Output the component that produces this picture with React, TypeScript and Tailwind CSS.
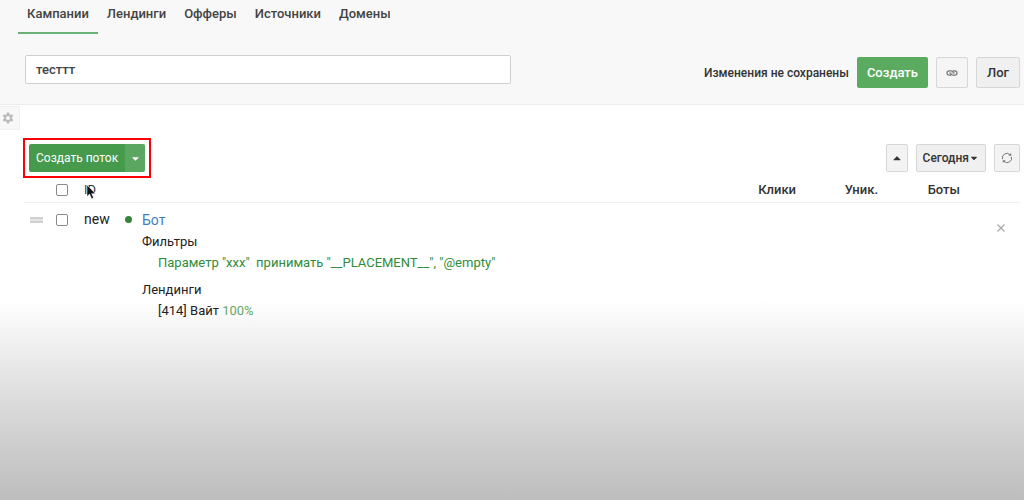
import type { ReactNode } from 'react';
import { FaCaretDown, FaCaretUp } from 'react-icons/fa';

const tabs = ['Кампании', 'Лендинги', 'Офферы', 'Источники', 'Домены'];

function GearIcon() {
  return (
    <svg viewBox="0 0 24 24" className="w-3 h-3" fill="none" stroke="#bbb" aria-hidden="true">
      <circle cx="12" cy="12" r="6" strokeWidth="4" />
      <path
        d="M12 1v5M12 18v5M2.5 6.5l4.3 2.5M17.2 15l4.3 2.5M2.5 17.5L6.8 15M17.2 9l4.3-2.5"
        strokeWidth="5"
      />
    </svg>
  );
}

function LinkIcon() {
  return (
    <svg viewBox="0 0 12 8" className="w-3 h-2" fill="none" stroke="#777" strokeLinecap="round" aria-hidden="true">
      <path d="M4.6 6.2H3.2a2.2 2.2 0 0 1 0-4.4h2c1 0 1.7.6 2 1.4M7.4 1.8h1.4a2.2 2.2 0 0 1 0 4.4h-2c-1 0-1.7-.6-2-1.4" strokeWidth="1.2" />
      <path d="M3.4 4h1.8M6.8 4h1.8" strokeWidth=".9" />
    </svg>
  );
}

function RefreshIcon() {
  return (
    <svg viewBox="0 0 12 12" className="w-3 h-3" fill="none" stroke="#777" aria-hidden="true">
      <path d="M1.6 7.2A4.5 4.5 0 0 1 9 2.6M10.4 4.8A4.5 4.5 0 0 1 3 9.4" />
      <path d="M10.2 1v2.8H7.4zM1.8 11V8.2h2.8z" fill="#777" stroke="none" />
    </svg>
  );
}

function Cursor() {
  return (
    <svg viewBox="0 0 10 16" className="absolute left-[2px] top-[6px] w-[10px] h-4" aria-hidden="true">
      <path d="M1 1v11.4l2.6-2.3 2 4.7 2-.9-2-4.5h3.6z" fill="#111" stroke="#fff" strokeWidth=".5" />
    </svg>
  );
}

function GrayButton({ label, className, children }: { label?: string; className: string; children: ReactNode }) {
  return (
    <button
      aria-label={label}
      className={`flex items-center justify-center border border-[#d6d6d6] text-[#333] font-medium rounded-xs ${className}`}
    >
      {children}
    </button>
  );
}

function Checkbox({ label }: { label: string }) {
  return (
    <input
      type="checkbox"
      aria-label={label}
      className="block appearance-none w-3 h-3 bg-white border border-[#8a8a8a] rounded-xs"
    />
  );
}

export default function App() {
  return (
    <div className="min-h-screen bg-[linear-gradient(to_bottom,#fff_60%,#f1f1f1_68%,#dadada_81%,#bdbdbd_100%)] font-['Roboto','Noto_Sans',sans-serif] text-[13px] text-[#222]">
      <header className="bg-[#f8f8f8] border-b border-[#ececec]">
        <nav className="flex pl-[18px]">
          {tabs.map((tab, i) => (
            <a
              key={tab}
              href="#"
              className={`px-[9px] pt-1 pb-2 leading-5 font-medium text-[#444] border-b-2 ${i === 0 ? 'border-[#6bb077]' : 'border-transparent'}`}
            >
              {tab}
            </a>
          ))}
        </nav>

        <div className="flex items-start justify-between pl-[25px] pr-1 pt-[21px] pb-4">
          <input
            type="text"
            aria-label="Название"
            defaultValue="тесттт"
            className="w-[486px] h-[29px] px-[10px] bg-white border border-[#d0d0d0] rounded-xs text-[#444] font-medium"
          />
          <div className="flex items-center gap-2 pt-[2px]">
            <span className="text-xs font-medium text-[#333]">Изменения не сохранены</span>
            <button className="h-[31px] px-[10px] bg-[#5aab5f] rounded-xs text-white font-medium">Создать</button>
            <GrayButton label="Ссылка" className="w-8 h-[31px] bg-[#f5f5f5]">
              <LinkIcon />
            </GrayButton>
            <GrayButton className="h-[31px] px-[10px] bg-[#f0f0f0]">Лог</GrayButton>
          </div>
        </div>
      </header>

      <main>
        <button aria-label="Настройки" className="flex items-center pl-[2px] w-5 h-6 mt-px bg-[#f8f8f8] border border-l-0 border-[#f0f0f0]">
          <GearIcon />
        </button>

        {/* Toolbar */}
        <div className="flex items-center justify-between mt-2 pl-[23px] pr-1">
          <div className="p-1 border-2 border-[#fb0007]">
            <div className="flex h-7 rounded-xs overflow-hidden text-white text-xs">
              <button className="px-[7px] bg-[#459a4b]">Создать поток</button>
              <button aria-label="Ещё" className="flex items-center justify-center w-5 bg-[#5ba660]">
                <FaCaretDown size={11} />
              </button>
            </div>
          </div>
          <div className="flex gap-2 text-xs">
            <GrayButton label="Свернуть" className="w-[22px] h-7 bg-[#f3f3f3]">
              <FaCaretUp size={12} />
            </GrayButton>
            <GrayButton className="h-7 px-[6px] bg-[#f0f0f0]">
              Сегодня <FaCaretDown size={10} />
            </GrayButton>
            <GrayButton label="Обновить" className="w-[26px] h-7 bg-[#f3f3f3]">
              <RefreshIcon />
            </GrayButton>
          </div>
        </div>

        {/* Flows */}
        <div className="pl-6 pr-1">
          <table className="w-full table-fixed">
            <thead>
              <tr className="h-6 border-b border-[#f1f1f1] text-[#333] leading-5">
                <th className="w-8"></th>
                <th className="w-7"><Checkbox label="Выбрать все" /></th>
                <th className="relative w-[41px] text-left font-normal">
                  ID
                  <Cursor />
                </th>
                <th></th>
                <th className="w-[82px] text-right font-medium">Клики</th>
                <th className="w-[82px] text-right font-medium">Уник.</th>
                <th className="w-[82px] text-right font-medium">Боты</th>
                <th className="w-[60px]"></th>
              </tr>
            </thead>
            <tbody>
              <tr className="align-top leading-[21px]">
                <td className="pt-[14px] pl-[6px]">
                  <div className="w-[13px] h-[6px] border-y-2 border-[#d0d0d0] bg-[#e6e6e6]"></div>
                </td>
                <td className="pt-[11px]"><Checkbox label="Выбрать поток new" /></td>
                <td className="pt-[6px] text-sm leading-[21px]">new</td>
                <td className="pt-[7px]">
                  <div className="flex gap-[10px]">
                    <span className="w-[7px] h-[7px] mt-[6px] rounded-full bg-[#35843a]"></span>
                    <div>
                      <a href="#" className="block text-sm leading-[21px] text-[#3f7fc1]">Бот</a>
                      <div>Фильтры</div>
                      <div className="pl-4 text-[#2f8c38]">
                        Параметр "xxx"&nbsp; принимать "__PLACEMENT__", "@empty"
                      </div>
                      <div className="mt-[6px]">Лендинги</div>
                      <div className="pl-4">
                        [414] Вайт <span className="text-[#65a869]">100%</span>
                      </div>
                    </div>
                  </div>
                </td>
                <td></td>
                <td></td>
                <td></td>
                <td className="pt-5">
                  <button aria-label="Удалить" className="block ml-9">
                    <svg viewBox="0 0 10 10" className="w-[10px] h-[10px]" stroke="#aaa" strokeWidth="1.3">
                      <path d="M1.5 1.5l7 7M8.5 1.5l-7 7" />
                    </svg>
                  </button>
                </td>
              </tr>
            </tbody>
          </table>
        </div>
      </main>
    </div>
  );
}
